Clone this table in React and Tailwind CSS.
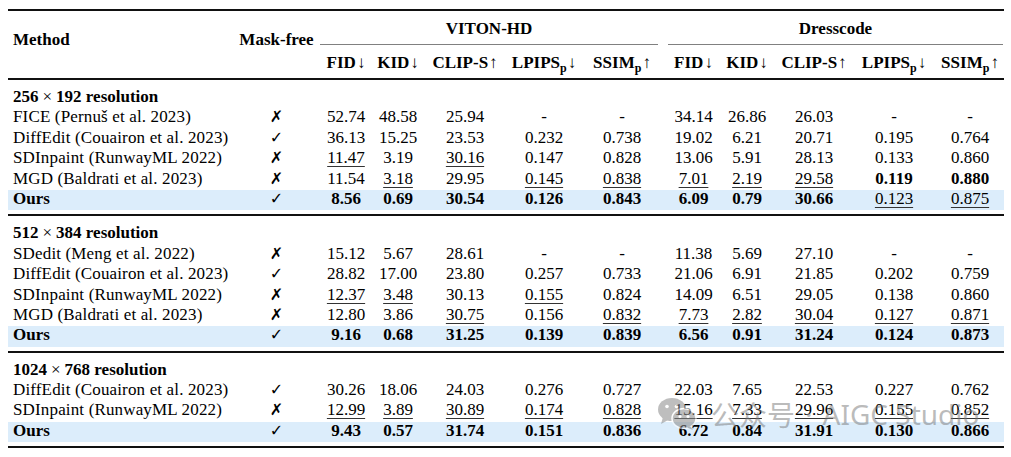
import React from "react";

const sections = [
  {
    a: "256",
    b: "192",
    rows: [
      { m: "FICE (Pernuš et al. 2023)", ok: false, v: ["52.74", "48.58", "25.94", "-", "-"], d: ["34.14", "26.86", "26.03", "-", "-"] },
      { m: "DiffEdit (Couairon et al. 2023)", ok: true, v: ["36.13", "15.25", "23.53", "0.232", "0.738"], d: ["19.02", "6.21", "20.71", "0.195", "0.764"] },
      { m: "SDInpaint (RunwayML 2022)", ok: false, v: ["_11.47", "3.19", "_30.16", "0.147", "0.828"], d: ["13.06", "5.91", "28.13", "0.133", "0.860"] },
      { m: "MGD (Baldrati et al. 2023)", ok: false, v: ["11.54", "_3.18", "29.95", "_0.145", "_0.838"], d: ["_7.01", "_2.19", "_29.58", "*0.119", "*0.880"] },
    ],
    ours: { v: ["*8.56", "*0.69", "*30.54", "*0.126", "*0.843"], d: ["*6.09", "*0.79", "*30.66", "_0.123", "_0.875"] },
  },
  {
    a: "512",
    b: "384",
    rows: [
      { m: "SDedit (Meng et al. 2022)", ok: false, v: ["15.12", "5.67", "28.61", "-", "-"], d: ["11.38", "5.69", "27.10", "-", "-"] },
      { m: "DiffEdit (Couairon et al. 2023)", ok: true, v: ["28.82", "17.00", "23.80", "0.257", "0.733"], d: ["21.06", "6.91", "21.85", "0.202", "0.759"] },
      { m: "SDInpaint (RunwayML 2022)", ok: false, v: ["_12.37", "_3.48", "30.13", "_0.155", "0.824"], d: ["14.09", "6.51", "29.05", "0.138", "0.860"] },
      { m: "MGD (Baldrati et al. 2023)", ok: false, v: ["12.80", "3.86", "_30.75", "0.156", "_0.832"], d: ["_7.73", "_2.82", "_30.04", "_0.127", "_0.871"] },
    ],
    ours: { v: ["*9.16", "*0.68", "*31.25", "*0.139", "*0.839"], d: ["*6.56", "*0.91", "*31.24", "*0.124", "*0.873"] },
  },
  {
    a: "1024",
    b: "768",
    rows: [
      { m: "DiffEdit (Couairon et al. 2023)", ok: true, v: ["30.26", "18.06", "24.03", "0.276", "0.727"], d: ["22.03", "7.65", "22.53", "0.227", "0.762"] },
      { m: "SDInpaint (RunwayML 2022)", ok: false, v: ["_12.99", "_3.89", "_30.89", "_0.174", "_0.828"], d: ["_15.16", "_7.33", "_29.96", "_0.155", "_0.852"] },
    ],
    ours: { v: ["*9.43", "*0.57", "*31.74", "*0.151", "*0.836"], d: ["*6.72", "*0.84", "*31.91", "*0.130", "*0.866"] },
  },
];

function Val({ s }) {
  if (s.startsWith("*")) return <span className="font-bold">{s.slice(1)}</span>;
  if (s.startsWith("_"))
    return (
      <span className="underline decoration-[1.3px] underline-offset-[2.5px] decoration-[#333]">{s.slice(1)}</span>
    );
  return <span>{s}</span>;
}

function Mark({ ok }) {
  return ok ? (
    <span className="font-['DejaVu_Sans',sans-serif] text-[16px] font-normal">✓</span>
  ) : (
    <span className="font-['DejaVu_Sans',sans-serif] text-[16px] font-bold italic">✗</span>
  );
}

function Row({ m, ok, v, d, ours }) {
  const vals = [...v, ...d];
  return (
    <div
      className={
        ours
          ? "grid grid-cols-[225px_87px_52px_52px_82px_76px_80px_63px_44px_90px_70px_75px] h-[20.4px] leading-[17.5px] bg-[#dcedfb]"
          : "grid grid-cols-[225px_87px_52px_52px_82px_76px_80px_63px_44px_90px_70px_75px] h-[20.4px] leading-[17.5px]"
      }
    >
      <div className={ours ? "pl-[5px] font-bold whitespace-nowrap" : "pl-[5px] whitespace-nowrap tracking-[0.15px]"}>{m}</div>
      <div className="text-center">
        <Mark ok={ok} />
      </div>
      {vals.map((s, i) => (
        <div key={i} className={i === 9 ? "text-center pl-[7px] whitespace-nowrap" : "text-center whitespace-nowrap"}>
          <Val s={s} />
        </div>
      ))}
    </div>
  );
}

function Metric({ name, up, sub, extra }) {
  return (
    <div className={extra ? "text-center pl-[7px] whitespace-nowrap" : "text-center whitespace-nowrap"}>
      <span className="font-bold">{name}</span>
      {sub && <span className="font-bold text-[12px] align-[-4px]">p</span>}
      <span className="font-normal ml-[1px]">{up ? "↑" : "↓"}</span>
    </div>
  );
}

function Metrics({ last }) {
  return (
    <>
      <Metric name="FID" />
      <Metric name="KID" />
      <Metric name="CLIP-S" up />
      <Metric name="LPIPS" sub />
      <Metric name="SSIM" sub up extra={last} />
    </>
  );
}

function WeChat() {
  return (
    <svg width="40" height="34" viewBox="0 0 40 34">
      <g opacity="0.55">
        <ellipse cx="15" cy="12.5" rx="14" ry="11.5" fill="#8a8a8a" />
        <path d="M6 20 L4 27 L12 22.5 Z" fill="#8a8a8a" />
        <circle cx="10" cy="9.5" r="1.8" fill="#fff" />
        <circle cx="19.5" cy="9.5" r="1.8" fill="#fff" />
        <ellipse cx="27" cy="21.5" rx="12" ry="10" fill="#8a8a8a" stroke="#fff" strokeWidth="1.5" />
        <path d="M33 29 L36 33 L30 30.5 Z" fill="#8a8a8a" />
        <circle cx="23" cy="19.5" r="1.5" fill="#fff" />
        <circle cx="31" cy="19.5" r="1.5" fill="#fff" />
      </g>
    </svg>
  );
}

export default function App() {
  return (
    <div className="relative w-[1011px] h-[457px] bg-white text-black font-['Liberation_Serif','Times_New_Roman',serif] text-[17px] overflow-hidden">
      <div className="ml-[8px] pt-[9px] w-[996px]">
        <div className="h-[2px] bg-[#111]" />
        <div className="grid grid-cols-[225px_87px_52px_52px_82px_76px_80px_63px_44px_90px_70px_75px] grid-rows-[34px_33px] leading-[17.5px]">
          <div className="row-span-2 pl-[5px] pt-[19.5px] font-bold">Method</div>
          <div className="row-span-2 text-center pt-[19.5px] font-bold">Mask-free</div>
          <div className="col-span-5">
            <div className="h-full mr-[4px] border-b border-[#808080] text-center pt-[9px] font-bold">VITON-HD</div>
          </div>
          <div className="col-span-5">
            <div className="h-full ml-[6px] mr-[1px] border-b border-[#808080] text-center pt-[9px] font-bold">Dresscode</div>
          </div>
          <div className="col-span-5 grid grid-cols-[52px_52px_82px_76px_80px] pt-[8.5px]">
            <Metrics />
          </div>
          <div className="col-span-5 grid grid-cols-[63px_44px_90px_70px_75px] pt-[8.5px]">
            <Metrics last />
          </div>
        </div>
        <div className="h-[2px] bg-[#111]" />
        {sections.map((sec, si) => (
          <div key={si}>
            <div className="pt-[8px] pb-[4px]">
              <div className="h-[20.4px] leading-[17.5px] pl-[5px] font-bold whitespace-nowrap">
                {sec.a}
                <span className="font-normal px-[4px]">×</span>
                {sec.b} resolution
              </div>
              {sec.rows.map((r, i) => (
                <Row key={i} {...r} />
              ))}
              <Row m="Ours" ok v={sec.ours.v} d={sec.ours.d} ours />
            </div>
            <div className="h-[2px] bg-[#111]" />
          </div>
        ))}
      </div>
      <div className="absolute left-[657px] top-[397px] flex items-center gap-[14px] text-[rgba(120,120,120,0.5)] font-['Noto_Sans','Noto_Sans_CJK_SC',sans-serif] text-[28px] leading-none whitespace-nowrap">
        <WeChat />
        <span className="font-['Noto_Sans_CJK_SC',sans-serif]">公众号</span>
        <span className="-ml-[4px]">·</span>
        <span className="-ml-[4px]">AIGC Studio</span>
      </div>
    </div>
  );
}
